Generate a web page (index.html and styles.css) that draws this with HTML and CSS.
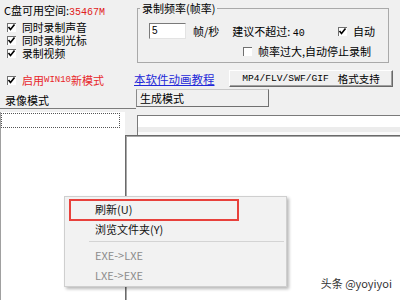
FILE: index.html
```html
<!DOCTYPE html>
<html>
<head>
<meta charset="utf-8">
<link rel="stylesheet" href="styles.css">
</head>
<body>
<div class="app">
  <div class="top">
    <div class="status">
      <div class="disk">C盘可用空间:<span class="free">35467M</span></div>
      <div class="checks">
        <div class="chk"><span class="box"><svg viewBox="0 0 9 9" width="9" height="9"><polyline points="1.5,4 3.5,6.5 7.5,1.5" fill="none" stroke="#000" stroke-width="1.6"/></svg></span>同时录制声音</div>
        <div class="chk"><span class="box"><svg viewBox="0 0 9 9" width="9" height="9"><polyline points="1.5,4 3.5,6.5 7.5,1.5" fill="none" stroke="#000" stroke-width="1.6"/></svg></span>同时录制光标</div>
        <div class="chk"><span class="box"><svg viewBox="0 0 9 9" width="9" height="9"><polyline points="1.5,4 3.5,6.5 7.5,1.5" fill="none" stroke="#000" stroke-width="1.6"/></svg></span>录制视频</div>
      </div>
      <div class="chk win10"><span class="box"><svg viewBox="0 0 9 9" width="9" height="9"><polyline points="1.5,4 3.5,6.5 7.5,1.5" fill="none" stroke="#000" stroke-width="1.6"/></svg></span>启用<span class="mono-s">WIN10</span>新模式</div>
    </div>
    <div class="settings">
      <fieldset class="rate">
        <legend>录制频率(帧率)</legend>
        <div class="rate-row">
          <span class="field">5</span>
          <span class="unit">帧/秒</span>
          <span class="hint">建议不超过: <span class="num">40</span></span>
          <div class="chk auto"><span class="box"><svg viewBox="0 0 9 9" width="9" height="9"><polyline points="1.5,4 3.5,6.5 7.5,1.5" fill="none" stroke="#000" stroke-width="1.6"/></svg></span>自动</div>
        </div>
        <div class="rate-row second">
          <div class="chk"><span class="box"></span>帧率过大,自动停止录制</div>
        </div>
      </fieldset>
      <div class="links">
        <a class="tutorial">本软件动画教程</a>
        <button class="formats"><span class="mono">MP4/FLV/SWF/GIF</span><span class="fmt-cn">格式支持</span></button>
      </div>
    </div>
  </div>
  <div class="tabs">
    <div class="tab-rec">录像模式</div>
    <div class="tab-gen">生成模式</div>
  </div>
  <div class="panes">
    <div class="list-pane"><div class="focus"></div></div>
    <div class="gen-head"><div class="gen-field"></div></div>
    <div class="gen-body"></div>
  </div>
  <div class="menu">
    <div class="item">刷新(U)</div>
    <div class="item">浏览文件夹(Y)</div>
    <div class="sep"></div>
    <div class="item off">EXE-&gt;LXE</div>
    <div class="item off">LXE-&gt;EXE</div>
    <div class="mark"></div>
  </div>
  <div class="watermark">头条 @yoyiyoi</div>
</div>
</body>
</html>
```
FILE: styles.css
```css
* { box-sizing: border-box; }
body {
  margin: 0;
  background: #f0f0f0;
  font-family: "Noto Sans CJK SC", "DejaVu Sans", sans-serif;
  font-size: 11px;
  color: #000;
}
.app {
  position: relative;
  width: 400px;
  height: 300px;
  overflow: hidden;
  background: #f0f0f0;
}
.top {
  display: flex;
  height: 88px;
}
.status {
  width: 134px;
  padding: 4px 0 0 4px;
}
.disk {
  line-height: 13px;
  height: 13px;
  white-space: nowrap;
}
.free {
  font-family: "Liberation Mono", monospace;
  font-size: 10px;
  color: #e02020;
}
.checks {
  margin-top: 5px;
  margin-bottom: -1px;
}
.chk {
  display: flex;
  align-items: center;
  height: 13px;
  line-height: 13px;
  white-space: nowrap;
}
.checks .chk {
  font-family: "Liberation Sans", "Noto Sans CJK SC", sans-serif;
  font-size: 10.8px;
}
.checks .box { margin-top: -2px; }
.status .chk { padding-left: 3px; }
.box {
  display: inline-block;
  width: 9px;
  height: 9px;
  margin-right: 6px;
  background: #fff;
  border-top: 1px solid #707070;
  border-left: 1px solid #707070;
  position: relative;
  flex: none;
}
.box svg {
  position: absolute;
  left: -1px;
  top: -1px;
}
.win10 {
  margin-top: 14px;
  color: #e8262a;
}
.mono-s {
  font-family: "Liberation Mono", monospace;
  font-size: 9px;
}
.settings {
  width: 266px;
  padding-top: 2px;
}
.rate {
  margin: 0 0 0 3px;
  width: 252px;
  border: 1px solid #a9a9a9;
  padding: 0 0 4px 0;
}
.rate legend {
  margin-left: 2px;
  padding: 0 2px;
  line-height: 13px;
  font-size: 11px;
}
.rate-row {
  display: flex;
  align-items: center;
  white-space: nowrap;
}
.rate-row:first-of-type {
  margin-top: 8px;
  height: 16px;
  padding-right: 13px;
}
.field {
  width: 37px;
  height: 16px;
  margin-left: 11px;
  background: #fff;
  border: 1px solid;
  border-color: #7a7a7a #e3e3e3 #e3e3e3 #7a7a7a;
  padding-left: 2px;
  line-height: 14px;
  font-family: "Liberation Sans", sans-serif;
  font-size: 10px;
}
.unit { margin-left: 7px; }
.hint { margin-left: 13px; }
.num {
  font-family: "Liberation Mono", monospace;
  font-size: 10px;
}
.auto { margin-left: auto; }
.second {
  margin-top: 6px;
  padding-left: 105px;
  height: 13px;
}
.links {
  display: flex;
  align-items: center;
  margin-top: 7px;
  height: 17px;
}
.tutorial {
  color: #1e28d8;
  text-decoration: underline;
  font-size: 11.5px;
  line-height: 14px;
  white-space: nowrap;
}
.formats {
  margin-left: auto;
  margin-right: 7px;
  width: 164px;
  height: 17px;
  padding: 0;
  background: #f0f0f0;
  border: 1px solid;
  border-color: #fff #696969 #696969 #fff;
  box-shadow: inset -1px -1px 0 #a0a0a0;
  font-family: "Noto Sans CJK SC", sans-serif;
  font-size: 10.5px;
  color: #000;
  display: flex;
  align-items: center;
  justify-content: center;
  line-height: 14px;
}
.mono {
  font-family: "Liberation Mono", monospace;
  font-size: 9.6px;
}
.fmt-cn { margin-left: 9px; }
.tabs {
  display: flex;
  height: 21px;
}
.tab-rec {
  width: 136px;
  height: 21px;
  border-bottom: 1px solid #7c7c7c;
  padding: 6px 0 0 5px;
  line-height: 13px;
}
.tab-gen {
  margin-top: 1px;
  width: 133px;
  height: 18px;
  border: 1px solid;
  border-color: #c8c8c8 #707070 #707070 #8a8a8a;
  padding-left: 3px;
  line-height: 16px;
}
.panes {
  display: grid;
  grid-template-columns: 125px 1fr;
  grid-template-rows: 26px 1fr;
  height: 191px;
}
.list-pane {
  grid-row: 1 / 3;
  margin-top: 3px;
  padding-top: 1px;
  background: #fff;
  border-left: 1px solid #a0a0a0;
}
.focus {
  width: 119px;
  height: 15px;
  border: 1px dotted #555;
}
.gen-head {
  padding: 6px 0 0 12px;
}
.gen-field {
  height: 20px;
  border-top: 1px solid #7a7a7a;
  border-left: 1px solid #7a7a7a;
  background: linear-gradient(#fff 0 11px, #ececec 11px 16px, #fafafa 16px);
}
.gen-body {
  background: #fff;
  border-top: 1px solid #6a6a6a;
  border-left: 1px solid #6a6a6a;
  box-shadow: inset 1px 1px 0 #a8a8a8;
}
.menu {
  position: absolute;
  left: 64px;
  top: 196px;
  width: 223px;
  height: 91px;
  background: #f2f2f2;
  border: 1px solid #cfcfcf;
  box-shadow: 2px 2px 3px rgba(0, 0, 0, 0.28);
  padding-top: 2px;
}
.item {
  height: 20px;
  line-height: 20px;
  padding-left: 30px;
  font-size: 11px;
  color: #111;
}
.item.off { color: #8c8c8c; }
.sep {
  height: 6px;
  margin-left: 24px;
  margin-right: 2px;
  padding-top: 2px;
}
.sep::before {
  content: "";
  display: block;
  border-top: 1px solid #d4d4d4;
}
.mark {
  position: absolute;
  left: 4px;
  top: 2px;
  width: 170px;
  height: 22px;
  border: 2px solid #e8413c;
}
.watermark {
  position: absolute;
  right: 8px;
  top: 276px;
  font-size: 11px;
  line-height: 14px;
  color: #333;
  text-shadow: 0 0 1px #fff;
}
```
